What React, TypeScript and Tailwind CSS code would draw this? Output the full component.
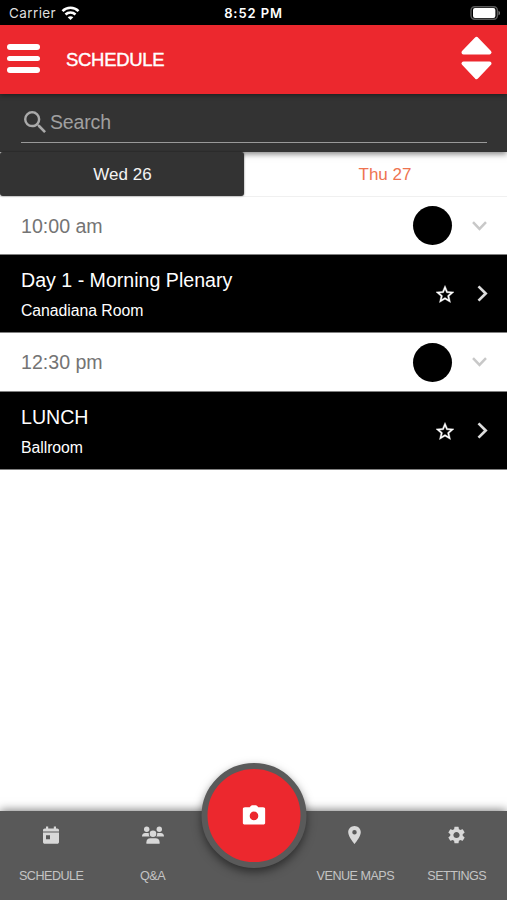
import React from 'react';

function StatusBar() {
  return (
    <div className="grid h-[25px] shrink-0 grid-cols-3 items-center bg-black pt-[2px] font-['Inter','Liberation_Sans',sans-serif] text-[13px] text-white">
      <div className="flex items-center gap-[5px] pl-[9px] text-[#dedede]">
        <span className="text-[13.5px] tracking-[0.4px]">Carrier</span>
        <svg className="mb-[2px]" width="19" height="14" viewBox="0 0 18 14" fill="none" stroke="#fff" strokeWidth="2.6">
          <path d="M1 5.1C5.4.7 12.6.7 17 5.1" />
          <path d="M4 8.5c2.800-2.700 7.200-2.700 10 0" />
          <path d="M9 14 6.200 11.200c1.600-1.400 4-1.400 5.600 0Z" fill="#fff" stroke="none" />
        </svg>
      </div>
      <div className="text-center font-semibold tracking-[0.9px]">8:52 PM</div>
      <div className="flex justify-end pr-[6px] pb-[2px]">
        <svg width="31" height="14" viewBox="0 0 31 14">
          <rect x="1" y="0.800" width="26.400" height="12.400" rx="3.600" fill="none" stroke="#5a5a5a" strokeWidth="1.400" />
          <rect x="3" y="2" width="22.400" height="10" rx="2" fill="#fff" />
          <path d="M28.500 4.700c2 .8 2 3.800 0 4.600Z" fill="#777" />
        </svg>
      </div>
    </div>
  );
}

function Header() {
  return (
    <header className="z-20 flex h-[69px] shrink-0 items-center bg-[#ec282e] pr-[14px] pl-[7px] shadow-[0_1px_5px_rgba(0,0,0,0.45)]">
      <div className="flex w-[33px] flex-col gap-[6px] pb-[2px]">
        <span className="h-[5.5px] rounded-full bg-white" />
        <span className="h-[5.5px] rounded-full bg-white" />
        <span className="h-[5.5px] rounded-full bg-white" />
      </div>
      <h1 className="ml-[26px] grow text-[18.5px] leading-6 tracking-[-0.3px] text-white [-webkit-text-stroke:0.4px_white]">
        SCHEDULE
      </h1>
      <svg className="mb-[3px]" width="34" height="46" viewBox="0 0 34 46" fill="#fff" stroke="#fff" strokeWidth="4" strokeLinejoin="round">
        <path d="M17.500 3.800 30.500 17.400h-26Z" />
        <path d="M4.500 28.400h26L17.500 42.200Z" />
      </svg>
    </header>
  );
}

function SearchBar() {
  return (
    <div className="z-10 h-[58px] shrink-0 bg-[#333] px-[20px] pt-[9px] shadow-[0_2px_6px_rgba(0,0,0,0.5)]">
      <div className="ml-px h-[40px] border-b-[1.5px] border-[#999] pl-[3px]">
        <div className="flex h-[38px] items-center">
          <svg width="22" height="22" viewBox="3 3 17.490 17.490" fill="#aaa">
            <path d="M15.500 14h-.79l-.28-.27A6.471 6.471 0 0 0 16 9.500 6.500 6.500 0 1 0 9.500 16c1.610 0 3.090-.59 4.230-1.570l.27.28v.79l5 4.990L20.490 19l-4.990-5zm-6 0C7.010 14 5 11.990 5 9.500S7.010 5 9.500 5 14 7.010 14 9.500 11.990 14 9.500 14z" />
          </svg>
          <span className="ml-[4px] text-[19.500px] leading-6 tracking-[-0.15px] text-[#a0a0a0]">Search</span>
        </div>
      </div>
    </div>
  );
}

function DayTabs() {
  return (
    <div className="flex h-[45px] shrink-0 border-b border-[#f0f0f0] text-[17px] leading-[46px]">
      <div className="z-10 w-[244px] rounded-[3px] bg-[#333] pl-px text-center text-[#f4f4f4] shadow-[0_0_2px_rgba(0,0,0,0.6)]">
        Wed 26
      </div>
      <div className="grow pl-[19px] text-center text-[#ee7350]">Thu 27</div>
    </div>
  );
}

function TimeRow({ time }: { time: string }) {
  return (
    <div className="flex h-[58px] items-center bg-white pr-[20px] pl-[21px] first:h-[57px]">
      <span className="grow text-[19.6px] leading-6 text-[#747474]">{time}</span>
      <span className="size-[39px] rounded-full bg-black" />
      <svg className="ml-[20px]" width="15" height="10" viewBox="0 0 15 10" fill="none" stroke="#c8c8c8" strokeWidth="2.5">
        <path d="m1 1.200 6.500 6.700L14 1.200" />
      </svg>
    </div>
  );
}

function EventRow({ title, place }: { title: string; place: string }) {
  return (
    <div className="flex h-[79px] items-center border-y border-[#808080] bg-black pr-[19px] pl-[21px] text-white">
      <div className="grow">
        <div className="text-[19.6px] leading-[26px]">{title}</div>
        <div className="mt-[8px] text-[15.8px] leading-5 tracking-[-0.05px]">{place}</div>
      </div>
      <svg width="18" height="18" viewBox="2 2 20 19" fill="#fff" stroke="#fff" strokeWidth="0.4">
        <path d="m22 9.24-7.19-.62L12 2 9.19 8.63 2 9.24l5.46 4.73L5.82 21 12 17.27 18.18 21l-1.63-7.03L22 9.24zM12 15.4l-3.76 2.27 1-4.28-3.32-2.88 4.38-.38L12 6.1l1.71 4.04 4.38.38-3.32 2.88 1 4.28L12 15.4z" />
      </svg>
      <svg className="ml-[23px]" width="11" height="17" viewBox="0 0 11 17" fill="none" stroke="#ddd" strokeWidth="2.700">
        <path d="m1.500 1.400 7.200 7.100-7.200 7.100" />
      </svg>
    </div>
  );
}

function NavItem({ label, children }: { label: string; children: React.ReactNode }) {
  return (
    <div className="flex flex-col items-center pt-[14px]">
      <div className="flex h-[20px] items-center text-[#d8d8d8]">{children}</div>
      <span className="mt-[23px] pl-px text-[12.6px] leading-4 tracking-[-0.5px] whitespace-nowrap text-[#c4c4c4]">{label}</span>
    </div>
  );
}

function BottomNav() {
  return (
    <nav className="relative grid h-[89px] shrink-0 grid-cols-5 bg-[#595959] shadow-[0_-1px_9px_rgba(0,0,0,0.5)]">
      <NavItem label="SCHEDULE">
        <svg width="16" height="18" viewBox="0 0 16 18" fill="currentColor">
          <path d="M3 0.600h2.200v2h5.600v-2H13v2h1.200c1 0 1.800.8 1.800 1.800v1.200H0V4.400c0-1 .8-1.800 1.800-1.800H3Z" />
          <path fillRule="evenodd" d="M0 6.600h16v9.400c0 1-.8 1.800-1.800 1.800H1.800c-1 0-1.800-.8-1.800-1.800Zm3 2.600v4h4v-4Z" />
        </svg>
      </NavItem>
      <NavItem label="Q&A">
        <svg className="ml-px" width="22" height="18" viewBox="0 0 22 18" fill="currentColor">
          <circle cx="4.700" cy="3.200" r="2.700" />
          <circle cx="17.300" cy="3.200" r="2.700" />
          <circle cx="11" cy="7.800" r="3.300" />
          <path d="M0 10.600C0 8.500 1.200 7.100 3.200 7.100h2.500c.5 0 .8.100 1.200.3-.2 1.300.1 2.300.9 3.200Z" />
          <path d="M22 10.600c0-2.100-1.200-3.500-3.200-3.500h-2.500c-.5 0-.8.100-1.200.3.200 1.300-.1 2.300-.9 3.200Z" />
          <path d="M4.400 17.800v-1.500c0-2.400 1.600-4 4-4h5.200c2.400 0 4 1.600 4 4v1.500Z" />
        </svg>
      </NavItem>
      <div className="relative">
        <div className="absolute -top-[48px] left-[calc(50%+0.5px)] flex size-[105px] -translate-x-1/2 items-center justify-center rounded-full border-[6px] border-[#5a5a5a] bg-[#ec282e] shadow-[0_4px_10px_rgba(0,0,0,0.5)]">
          <svg className="mb-px" width="23" height="20" viewBox="0 0 23 20" fill="#fff">
            <path fillRule="evenodd" d="M7.200 2.200 8.300.9c.4-.4.900-.6 1.400-.6h3.600c.5 0 1 .2 1.400.6l1.100 1.300h4.700c1.400 0 2.300.9 2.300 2.200v13c0 1.300-.9 2.200-2.300 2.200h-18C1.100 19.600.2 18.700.2 17.400v-13c0-1.300.9-2.200 2.300-2.200ZM11.500 6.600a4.300 4.300 0 1 0 0 8.600 4.300 4.300 0 0 0 0-8.600Z" />
          </svg>
        </div>
      </div>
      <NavItem label="VENUE MAPS">
        <svg width="13" height="18" viewBox="5 2 14 20" fill="currentColor">
          <path d="M12 2C8.130 2 5 5.130 5 9c0 5.250 7 13 7 13s7-7.750 7-13c0-3.870-3.130-7-7-7zm0 9.500a2.500 2.500 0 0 1 0-5 2.500 2.500 0 0 1 0 5z" />
        </svg>
      </NavItem>
      <NavItem label="SETTINGS">
        <svg width="17" height="18" viewBox="2.200 2 19.600 20" fill="currentColor">
          <path d="M19.140 12.940c.04-.3.06-.61.06-.94 0-.32-.02-.64-.07-.94l2.030-1.580a.49.49 0 0 0 .12-.61l-1.920-3.320a.488.488 0 0 0-.59-.22l-2.390.96c-.5-.38-1.030-.7-1.620-.94l-.36-2.540a.484.484 0 0 0-.48-.41h-3.840c-.24 0-.43.17-.47.41l-.36 2.540c-.59.24-1.130.57-1.620.94l-2.390-.96c-.22-.08-.47 0-.59.22L2.740 8.870c-.12.21-.08.47.12.61l2.030 1.580c-.05.3-.09.63-.09.94s.02.64.07.94l-2.030 1.580a.49.49 0 0 0-.12.61l1.920 3.320c.12.22.37.29.59.22l2.390-.96c.5.38 1.030.7 1.620.94l.36 2.540c.05.24.24.41.48.41h3.840c.24 0 .44-.17.47-.41l.36-2.540c.59-.24 1.130-.56 1.620-.94l2.390.96c.22.08.47 0 .59-.22l1.920-3.320c.12-.22.07-.47-.12-.61l-2.010-1.580zM12 15.600c-1.980 0-3.600-1.620-3.600-3.600s1.620-3.600 3.600-3.600 3.600 1.620 3.600 3.600-1.620 3.600-3.600 3.600z" />
        </svg>
      </NavItem>
    </nav>
  );
}

export default function App() {
  return (
    <div className="flex h-[900px] w-full flex-col overflow-hidden bg-white font-['Liberation_Sans',Arial,sans-serif]">
      <StatusBar />
      <Header />
      <SearchBar />
      <DayTabs />
      <main className="grow">
        <TimeRow time="10:00 am" />
        <EventRow title="Day 1 - Morning Plenary" place="Canadiana Room" />
        <TimeRow time="12:30 pm" />
        <EventRow title="LUNCH" place="Ballroom" />
      </main>
      <BottomNav />
    </div>
  );
}
